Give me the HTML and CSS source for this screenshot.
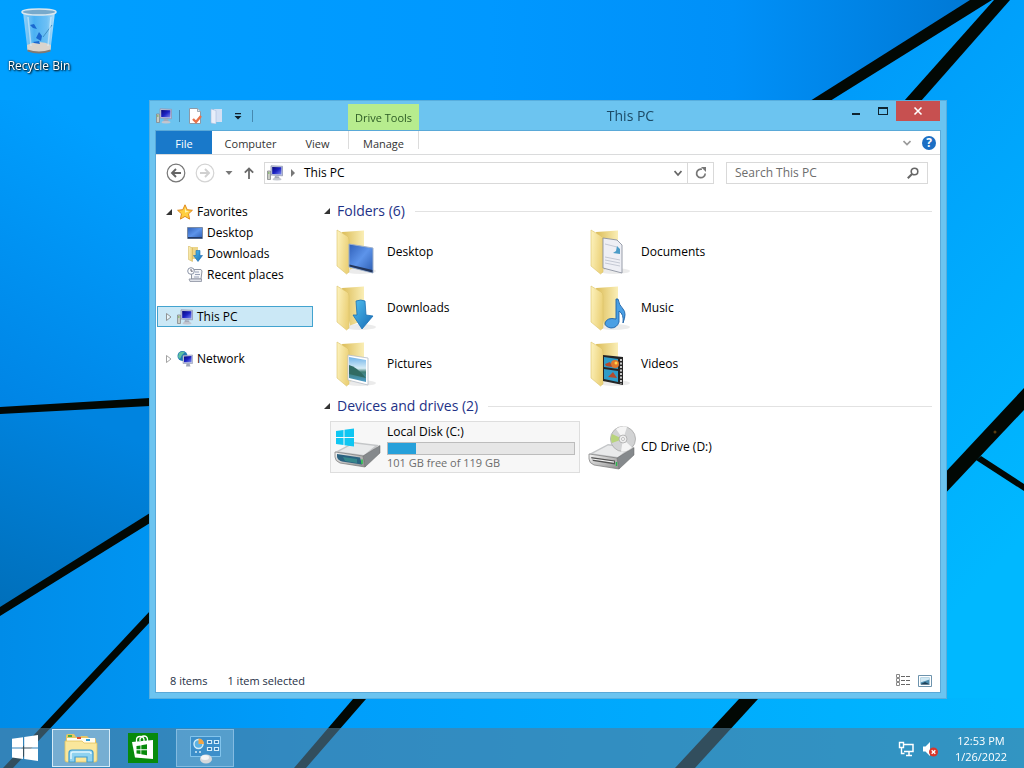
FILE: index.html
```html
<!DOCTYPE html>
<html lang="en">
<head>
    <meta charset="UTF-8">
    <meta name="viewport" content="width=device-width, initial-scale=1.0">
    <title>This PC</title>
    <link rel="stylesheet" href="styles.css">
</head>
<body>
    <!-- Shared icons -->
    <svg class="sprite" aria-hidden="true">
        <defs>
            <linearGradient id="g-flap" x1="0" y1="0" x2="1" y2="0.3">
                <stop offset="0" stop-color="#fdf3bf"/><stop offset="1" stop-color="#ecd27a"/>
            </linearGradient>
            <linearGradient id="g-back" x1="0" y1="0" x2="1" y2="0">
                <stop offset="0" stop-color="#dcbd58"/><stop offset="1" stop-color="#faeeb6"/>
            </linearGradient>
            <linearGradient id="g-screen" x1="0" y1="0" x2="1" y2="1">
                <stop offset="0" stop-color="#2f5fb8"/><stop offset="0.5" stop-color="#5d94ea"/><stop offset="1" stop-color="#2c5cb0"/>
            </linearGradient>
            <linearGradient id="g-arrow" x1="0" y1="0" x2="1" y2="1">
                <stop offset="0" stop-color="#4fc0f0"/><stop offset="1" stop-color="#1769b4"/>
            </linearGradient>
            <linearGradient id="g-photo" x1="0" y1="0" x2="0" y2="1">
                <stop offset="0" stop-color="#6fb2e8"/><stop offset="0.45" stop-color="#d6ecf6"/><stop offset="0.6" stop-color="#3f7f76"/><stop offset="1" stop-color="#4b9bc8"/>
            </linearGradient>
            <linearGradient id="g-metal" x1="0" y1="0" x2="1" y2="1">
                <stop offset="0" stop-color="#f6f6f6"/><stop offset="1" stop-color="#8c8c8c"/>
            </linearGradient>
            <linearGradient id="g-pc" x1="0" y1="0" x2="1" y2="1">
                <stop offset="0" stop-color="#0a0a78"/><stop offset="0.5" stop-color="#1c22c4"/><stop offset="1" stop-color="#7d8bf0"/>
            </linearGradient>
            <linearGradient id="g-glass" x1="0" y1="0" x2="1" y2="0">
                <stop offset="0" stop-color="#9ad2f6"/><stop offset="0.35" stop-color="#4fb2f2"/><stop offset="0.75" stop-color="#74c2f4"/><stop offset="1" stop-color="#c0e4fa"/>
            </linearGradient>
        </defs>

        <symbol id="i-folder" viewBox="0 0 48 48">
            <ellipse cx="28" cy="43" rx="16" ry="3" fill="#000" opacity="0.08"/>
            <path d="M10 4l22-1.500v34l-14 5z" fill="url(#g-back)"/>
            <path d="M5 2l10 6q2 1 2 4v32l-2.500 2L5 38z" fill="url(#g-flap)" stroke="#dcc26a" stroke-width="0.6"/>
        </symbol>

        <symbol id="i-pc" viewBox="0 0 16 16">
            <path d="M.5 6h3v8.500h-3z" fill="#c9ccc4" stroke="#85888c" stroke-width="0.8"/>
            <path d="M1 8h1.500" stroke="#5da83a"/>
            <path d="M4 .8l11.500.5v9.500L4 10z" fill="#c7cde0" stroke="#8f97b4" stroke-width="0.8"/>
            <path d="M5.200 2l9.200.3v7.300l-9.200-.5z" fill="url(#g-pc)"/>
            <path d="M8 11l4 .4.800 2.600H7z" fill="#a4a9b8"/>
            <ellipse cx="10" cy="14.200" rx="4.500" ry="1.200" fill="#c3c6cf"/>
        </symbol>

        <symbol id="i-winlogo" viewBox="0 0 26 26">
            <path d="M0 3.700l11-1.500v10.300H0zM12.200 2L26 0v12.500H12.200zM0 13.600h11V24L0 22.400zM12.200 13.600H26V26l-13.800-1.900z" fill="currentColor"/>
        </symbol>

        <symbol id="i-drive" viewBox="0 0 48 28">
            <path d="M1 12L20 2l25 3-14 12z" fill="#c4c6c8"/>
            <path d="M5 11.500L20 3.500l21 2.500-11 9z" fill="#e9eaeb"/>
            <path d="M29 16L46 5.500V13L31 27z" fill="#85898c" stroke="#666" stroke-width="0.5"/>
            <path d="M1 12l28 4 2 11-25-4q-5-2-5-6z" fill="url(#g-metal)" stroke="#777" stroke-width="0.7"/>
        </symbol>
    </svg>

    <main class="desktop">
        <svg class="wallpaper" viewBox="0 0 1024 768" preserveAspectRatio="none" aria-hidden="true">
            <defs>
                <linearGradient id="w-base" x1="0" y1="0" x2="1" y2="0.7">
                    <stop offset="0" stop-color="#009dff"/>
                    <stop offset="0.6" stop-color="#009bfa"/>
                    <stop offset="1" stop-color="#00b8ff"/>
                </linearGradient>
                <linearGradient id="w-top" x1="0" y1="0" x2="1" y2="0">
                    <stop offset="0" stop-color="#00a0ff"/>
                    <stop offset="0.5" stop-color="#0098ff"/>
                    <stop offset="0.75" stop-color="#0090f8"/>
                    <stop offset="1" stop-color="#0078d4"/>
                </linearGradient>
                <linearGradient id="w-left" x1="0.3" y1="0" x2="0" y2="1">
                    <stop offset="0" stop-color="#0084e0"/>
                    <stop offset="1" stop-color="#006fba"/>
                </linearGradient>
                <linearGradient id="w-fade" x1="0.3" y1="0" x2="0" y2="1">
                    <stop offset="0" stop-color="#009fff"/>
                    <stop offset="1" stop-color="#0084e4"/>
                </linearGradient>
                <linearGradient id="w-bottom" x1="0" y1="0" x2="1" y2="0">
                    <stop offset="0" stop-color="#008ce8"/>
                    <stop offset="0.3" stop-color="#009dfb"/>
                    <stop offset="1" stop-color="#00b8ff"/>
                </linearGradient>
            </defs>
            <rect width="1024" height="768" fill="url(#w-base)"/>
            <path d="M0 0h978L820 101H0z" fill="url(#w-top)"/>
            <path d="M0 100h150v302L0 411z" fill="url(#w-fade)"/>
            <path d="M0 411l150-8v117L0 611z" fill="url(#w-left)"/>
            <path d="M0 611l150-93v180h874v70H0z" fill="url(#w-bottom)"/>
            <g fill="#020804">
                <path d="M810 101L970 0h22L830 101z"/>
                <path d="M904 101L994 0h16l-89 101z"/>
                <path d="M940 478l84-90v22l-84 89z"/>
                <path d="M976 460l5-4 43 28v7z"/>
                <path d="M739 699h19l-63 69h-20z"/>
                <path d="M0 407l150-9v8L0 414z"/>
                <path d="M0 607l150-94v10L0 616z"/>
                <path d="M150 611v11L13 768H3z"/>
                <path d="M353 699h13l-60 69h-12z"/>
            </g>
            <circle cx="995" cy="432" r="1.500" fill="#5a3d10"/>
        </svg>

        <button class="desktop-icon" type="button">
            <svg class="bin" viewBox="0 0 38 46" aria-hidden="true">
                <path d="M3 4l4.500 38Q19 48 30.500 42L35 4z" fill="url(#g-glass)" opacity="0.95"/>
                <path d="M7 37q12-6 24 0l-.5 5Q19 48 7.500 42z" fill="#d9d4cd"/>
                <path d="M7.500 41.500q11.500 4 23 0v2q-11.500 4-23 0z" fill="#7e7a74"/>
                <path d="M10 17l4-1 3 5-4-1zM16 30l3-6 3 4-1 5zM13 34l6-1 1 3-6-1z" fill="#1a68d0"/>
                <path d="M23 29l9-12" stroke="#3e8fc4" stroke-width="1"/>
                <path d="M8 9l3 29M31 9l-3 29" stroke="#d8effc" stroke-width="1.500" opacity="0.6"/>
                <ellipse cx="19" cy="4" rx="17" ry="3" fill="#77a9cb" stroke="#dbe7ee" stroke-width="1.500"/>
            </svg>
            <span>Recycle Bin</span>
        </button>

        <section class="window" aria-label="This PC">
            <header class="titlebar">
                <div class="quick-access">
                    <svg class="icon16" aria-hidden="true"><use href="#i-pc"/></svg>
                    <span class="divider"></span>
                    <button type="button" aria-label="Properties">
                        <svg class="icon16" viewBox="0 0 16 16" aria-hidden="true">
                            <path d="M2.500.5h8l3 3v12h-11z" fill="#fff" stroke="#8c9aa8"/>
                            <path d="M10.500.5v3h3" fill="#dfe5ea" stroke="#8c9aa8" stroke-width="0.8"/>
                            <path d="M6 11l3 3 5-6" fill="none" stroke="#e8724a" stroke-width="2.400"/>
                        </svg>
                    </button>
                    <button type="button" aria-label="New folder">
                        <svg class="icon16" viewBox="0 0 16 16" aria-hidden="true">
                            <path d="M5 1h8v13H5z" fill="#d4e0f4"/>
                            <path d="M2 1l5 1.500V16l-5-1z" fill="#e8eefa" stroke="#a8bede" stroke-width="0.6"/>
                        </svg>
                    </button>
                    <button class="narrow" type="button" aria-label="Customize toolbar">
                        <svg class="icon8" viewBox="0 0 8 8" aria-hidden="true"><path d="M1 1h6v1.300H1zM.5 4h7L4 7.500z" fill="#10202c"/></svg>
                    </button>
                    <span class="divider"></span>
                </div>
                <div class="context-tab">Drive Tools</div>
                <h1 class="title">This PC</h1>
                <div class="window-controls">
                    <button type="button" aria-label="Minimize"><svg viewBox="0 0 12 12" aria-hidden="true"><path d="M2 8h8v2H2z" fill="#0f2430"/></svg></button>
                    <button type="button" aria-label="Maximize"><svg viewBox="0 0 12 12" aria-hidden="true"><path d="M1 2h10v8H1zM2 4v5h8V4z" fill="#0f2430" fill-rule="evenodd"/></svg></button>
                    <button class="close" type="button" aria-label="Close"><svg viewBox="0 0 12 12" aria-hidden="true"><path d="M2.500 2.500l7 7m0-7l-7 7" stroke="#fff" stroke-width="1.600"/></svg></button>
                </div>
            </header>

            <div class="client">
                <nav class="ribbon">
                    <button class="tab file" type="button">File</button>
                    <button class="tab computer" type="button">Computer</button>
                    <button class="tab view" type="button">View</button>
                    <button class="tab manage" type="button">Manage</button>
                    <div class="ribbon-right">
                        <button type="button" aria-label="Expand the ribbon"><svg class="icon8" viewBox="0 0 8 8" aria-hidden="true"><path d="M.5 2L4 5.500 7.500 2" fill="none" stroke="#9a9a9a" stroke-width="1.700"/></svg></button>
                        <button class="help" type="button" aria-label="Help">?</button>
                    </div>
                </nav>

                <div class="toolbar">
                    <div class="history">
                        <button type="button" aria-label="Back">
                            <svg class="icon20" viewBox="0 0 20 20" aria-hidden="true"><circle cx="10" cy="10" r="8.800" fill="#fff" stroke="#777" stroke-width="1.200"/><path d="M15 10H6m4-4l-4 4 4 4" fill="none" stroke="#666" stroke-width="1.900"/></svg>
                        </button>
                        <button type="button" aria-label="Forward" disabled>
                            <svg class="icon20" viewBox="0 0 20 20" aria-hidden="true"><circle cx="10" cy="10" r="8.800" fill="#fff" stroke="#d4d4d4" stroke-width="1.200"/><path d="M5 10h9m-4-4l4 4-4 4" fill="none" stroke="#d0d0d0" stroke-width="1.900"/></svg>
                        </button>
                        <button class="recent" type="button" aria-label="Recent locations"><svg class="icon8" viewBox="0 0 8 8" aria-hidden="true"><path d="M.5 2h7L4 6z" fill="#777"/></svg></button>
                        <button type="button" aria-label="Up"><svg class="icon12" viewBox="0 0 12 12" aria-hidden="true"><path d="M6 12V1.500M1.800 5.700L6 1.500l4.200 4.200" fill="none" stroke="#6a6a6a" stroke-width="1.800"/></svg></button>
                    </div>
                    <div class="address">
                        <svg class="icon16" aria-hidden="true"><use href="#i-pc"/></svg>
                        <svg class="icon8" viewBox="0 0 8 8" aria-hidden="true"><path d="M2 0l4 4-4 4z" fill="#777"/></svg>
                        <button class="crumb" type="button">This PC</button>
                        <button class="drop" type="button" aria-label="Previous locations"><svg class="icon8" viewBox="0 0 8 8" aria-hidden="true"><path d="M.5 2L4 6l3.500-4" fill="none" stroke="#666" stroke-width="1.800"/></svg></button>
                        <button class="refresh" type="button" aria-label="Refresh"><svg class="icon12" viewBox="0 0 12 12" aria-hidden="true"><path d="M7 2.200A4.300 4.300 0 1 0 10.200 6.500" fill="none" stroke="#777" stroke-width="1.700"/><path d="M6 0h5v5z" fill="#777"/></svg></button>
                    </div>
                    <div class="search">
                        <input type="text" placeholder="Search This PC" aria-label="Search This PC">
                        <svg class="icon12" viewBox="0 0 12 12" aria-hidden="true"><circle cx="7.500" cy="4.500" r="3.300" fill="none" stroke="#666" stroke-width="1.600"/><path d="M5 7L.8 11.200" stroke="#666" stroke-width="2"/></svg>
                    </div>
                </div>

                <div class="body">
                    <aside class="tree">
                        <button class="node" type="button">
                            <svg class="icon8" viewBox="0 0 8 8" aria-hidden="true"><path d="M7 1v6H1z" fill="#333"/></svg>
                            <svg class="icon16" viewBox="0 0 16 16" aria-hidden="true"><path d="M8 .8l2.200 4.900 5.200.6-3.900 3.500 1.100 5.300L8 12.400l-4.600 2.700 1.100-5.300L.6 6.300l5.200-.6z" fill="#ffcf3f" stroke="#e08a1e" stroke-width="1"/><path d="M8 3.500l1.200 3.300 3 .5-4.200 1.400z" fill="#fff3b0"/></svg>
                            Favorites
                        </button>
                        <button class="node child" type="button">
                            <svg class="icon16" viewBox="0 0 16 16" aria-hidden="true"><path d="M.5 2.500h15v11H.5z" fill="url(#g-screen)" stroke="#7a8ba4"/><path d="M1 12h14v1.500H1z" fill="#233a66"/></svg>
                            Desktop
                        </button>
                        <button class="node child" type="button">
                            <svg class="icon16" viewBox="0 0 16 16" aria-hidden="true"><path d="M5 1h6v12H5z" fill="#ecd58a"/><path d="M1.500 0l4 2v13.500l-4-2z" fill="url(#g-flap)" stroke="#cfae4e" stroke-width="0.5"/><path d="M9 4.500h4v5h2.500L11 15.500 6.500 9.500H9z" fill="url(#g-arrow)" stroke="#1a6cb0" stroke-width="0.6"/></svg>
                            Downloads
                        </button>
                        <button class="node child" type="button">
                            <svg class="icon16" viewBox="0 0 16 16" aria-hidden="true"><path d="M4.500 2.500H14l1 1.500-1 8H4.500z" fill="#f4f5f8" stroke="#9096a2"/><path d="M2 12h12.500v2.500H3z" fill="#dfe2e9" stroke="#8a90a0" stroke-width="0.8"/><path d="M8 5h4M8 7.500h5M7 10h5" stroke="#98a0b6"/><circle cx="4" cy="4" r="3.300" fill="#fff" stroke="#8a93a6"/><path d="M4 2v2.200h1.800" fill="none" stroke="#556" stroke-width="0.9"/></svg>
                            Recent places
                        </button>
                        <button class="node group selected" type="button">
                            <svg class="icon8" viewBox="0 0 8 8" aria-hidden="true"><path d="M1.500.5L6 4 1.500 7.500z" fill="#e8f5fb" stroke="#888" stroke-width="0.9"/></svg>
                            <svg class="icon16" aria-hidden="true"><use href="#i-pc"/></svg>
                            This PC
                        </button>
                        <button class="node group" type="button">
                            <svg class="icon8" viewBox="0 0 8 8" aria-hidden="true"><path d="M1.500.5L6 4 1.500 7.500z" fill="#fff" stroke="#999" stroke-width="0.9"/></svg>
                            <svg class="icon16" viewBox="0 0 16 16" aria-hidden="true"><circle cx="5.500" cy="5" r="5" fill="#1f78b4"/><path d="M2 2q3-2.500 6-1L5 4 3 8 1 6z" fill="#5fc0a0"/><path d="M6 4.500l9.500-.5v8.500H6z" fill="#c7cde0" stroke="#8f97b4" stroke-width="0.6"/><path d="M7 5.500l7.500-.4v6.200H7z" fill="url(#g-pc)"/><path d="M9.500 12.500h3l1 3H9z" fill="#9fa6b8"/></svg>
                            Network
                        </button>
                    </aside>

                    <div class="files">
                        <h2 class="section-title"><svg class="icon8" viewBox="0 0 8 8" aria-hidden="true"><path d="M7 1v6H1z" fill="#333"/></svg><span>Folders (6)</span></h2>
                        <div class="tiles">
                            <button class="tile" type="button">
                                <svg class="icon48" viewBox="2 0 48 48" aria-hidden="true"><use href="#i-folder" width="48" height="48"/><path d="M17 16l24 4v25l-24-6z" fill="url(#g-screen)" stroke="#9fb0c8"/><path d="M17.500 36.500l23 5.500v2.500l-23-6z" fill="#22355a"/></svg>
                                <span>Desktop</span>
                            </button>
                            <button class="tile" type="button">
                                <svg class="icon48" viewBox="2 0 48 48" aria-hidden="true"><use href="#i-folder" width="48" height="48"/><path d="M17 10l14 2 5 5v28l-19-5z" fill="#eeeff5" stroke="#8d93a0" stroke-width="0.9"/><path d="M19 16l12 3M19 29l15 3M19 32l15 3M19 35l15 3" stroke="#c0c4d0" stroke-width="0.9"/><path d="M27 25l7 1v-5l-3-3-1 5z" fill="#4c9cc8"/></svg>
                                <span>Documents</span>
                            </button>
                            <button class="tile" type="button">
                                <svg class="icon48" viewBox="2 0 48 48" aria-hidden="true"><use href="#i-folder" width="48" height="48"/><path d="M24 17q5-2 9 0l1 14 7 1-11 13-9-14h4z" fill="url(#g-arrow)" stroke="#1b71b5" stroke-width="0.8"/></svg>
                                <span>Downloads</span>
                            </button>
                            <button class="tile" type="button">
                                <svg class="icon48" viewBox="2 0 48 48" aria-hidden="true"><use href="#i-folder" width="48" height="48"/><path d="M30 15h2q1 6 5 10t0 14q1-9-4-12v11q-2 6-8 6-6-1-6-5 2-6 11-4z" fill="#4a9fe4" stroke="#1c62a8" stroke-width="0.9"/></svg>
                                <span>Music</span>
                            </button>
                            <button class="tile" type="button">
                                <svg class="icon48" viewBox="2 0 48 48" aria-hidden="true"><use href="#i-folder" width="48" height="48"/><path d="M16 15l20 3v27l-20-5z" fill="#fff" stroke="#b5bcc6" stroke-width="0.8"/><path d="M17 17l17 3v22l-17-4z" fill="url(#g-photo)"/><path d="M17 25q8 2 17 13l-17-4z" fill="#316b63"/></svg>
                                <span>Pictures</span>
                            </button>
                            <button class="tile" type="button">
                                <svg class="icon48" viewBox="2 0 48 48" aria-hidden="true"><use href="#i-folder" width="48" height="48"/><path d="M17 15l20 2v28l-20-4z" fill="#252525"/><path d="M18 17l14 2v10l-14-2zM18 29l14 2v11l-14-3z" fill="#2f9cc8"/><circle cx="29" cy="24" r="4" fill="#e0782c"/><path d="M19 24l5-2 2 5-6-1zM22 37l5-5 4 6z" fill="#b64a2a"/><circle cx="30" cy="23" r="1.500" fill="#ffd24a"/><path d="M35 19v25" stroke="#f2f2f2" stroke-width="1.600" stroke-dasharray="2 1.500"/></svg>
                                <span>Videos</span>
                            </button>
                        </div>

                        <h2 class="section-title"><svg class="icon8" viewBox="0 0 8 8" aria-hidden="true"><path d="M7 1v6H1z" fill="#333"/></svg><span>Devices and drives (2)</span></h2>
                        <div class="tiles">
                            <button class="tile active" type="button">
                                <svg class="icon48" viewBox="0 0 48 48" aria-hidden="true">
                                    <use href="#i-drive" y="17" width="48" height="28"/>
                                    <path d="M3 31l23 3.500 2 7-20-3q-5-2-5-5z" fill="#2b6280"/>
                                    <path d="M9 34l14 2v4l-12-2z" fill="#3c9790" opacity="0.7"/>
                                    <path d="M28 36.500v4.500" stroke="#27c84a" stroke-width="1.500"/>
                                    <g fill="#10c6f2"><path d="M2 8l7.500-1v7H2zM10.500 6.800L20 5.500V14h-9.500zM2 15h7.500v7L2 21zM10.500 15H20v8.500l-9.500-1.300z"/></g>
                                </svg>
                                <span class="drive-info">
                                    <span>Local Disk (C:)</span>
                                    <span class="capacity"><span class="used" style="width: 15%"></span></span>
                                    <span class="free">101 GB free of 119 GB</span>
                                </span>
                            </button>
                            <button class="tile" type="button">
                                <svg class="icon48" viewBox="0 0 48 48" aria-hidden="true">
                                    <use href="#i-drive" y="19" width="48" height="28"/>
                                    <path d="M3 34l24 3.500v4L5 38z" fill="#555"/><path d="M4 36l22 3.200" stroke="#f4f4f4" stroke-width="1.200"/>
                                    <path d="M28.500 39v4" stroke="#27b84a" stroke-width="1.400"/>
                                    <circle cx="35" cy="16" r="12.500" fill="#d2d3d4" stroke="#a8a8a8" stroke-width="0.8"/>
                                    <path d="M35 16L28 6q6-4 11-2zM35 16l9 8.500q-5 5-11 4z" fill="#f5f5f5"/>
                                    <path d="M35 16l-11-5q-2 5 0 9z" fill="#b8d47c"/>
                                    <circle cx="35" cy="16" r="4" fill="#eee" stroke="#aaa" stroke-width="0.8"/><circle cx="35" cy="16" r="1.500" fill="#fff" stroke="#999" stroke-width="0.6"/>
                                </svg>
                                <span>CD Drive (D:)</span>
                            </button>
                        </div>
                    </div>
                </div>

                <footer class="statusbar">
                    <span>8 items</span>
                    <span>1 item selected</span>
                    <div class="view-switch">
                        <button type="button" aria-label="Details view"><svg class="icon16" viewBox="0 0 16 16" aria-hidden="true"><path d="M1.500 1.500h3v3h-3zM1.500 5.500h3v3h-3zM1.500 9.500h3v3h-3z" fill="#fff" stroke="#888"/><path d="M6 3.500h4m1 0h4M6 7.500h4m1 0h4M6 11.500h4m1 0h4" stroke="#666"/></svg></button>
                        <button type="button" aria-label="Large icons view"><svg class="icon16" viewBox="0 0 16 16" aria-hidden="true"><path d="M1.500 2.500h13v11h-13z" fill="#fff" stroke="#6d93ad"/><path d="M3.500 4.500h9v7h-9z" fill="#4d8cae"/><path d="M3.500 4.500h9v2l-9 3z" fill="#cfe8f4"/><path d="M4 11l4-2 5 2.500H4z" fill="#1f3f56"/></svg></button>
                    </div>
                </footer>
            </div>
        </section>
    </main>

    <footer class="taskbar">
        <button class="start" type="button" aria-label="Start"><svg viewBox="0 0 26 26" aria-hidden="true"><use href="#i-winlogo"/></svg></button>
        <button class="task current" type="button" aria-label="File Explorer">
            <svg viewBox="0 0 36 32" aria-hidden="true">
                <path d="M3 4q0-2 2-2h6l2 3h4l1-1h6l2 2h5q2 0 2 2v20H3z" fill="#e8c765"/>
                <path d="M4 6h28v5H4z" fill="#fffdf2"/>
                <path d="M5 3h4v2H5z" fill="#48b04a"/><path d="M14 5h4v2h-4z" fill="#e04b32"/><path d="M23 7h4v2h-4z" fill="#2c9fd8"/>
                <path d="M2 9h17l2 2h13v17q0 2-2 2H4q-2 0-2-2z" fill="#fae79c" stroke="#e2c35e" stroke-width="0.8"/>
                <path d="M6 30V21q0-3 3-3h18q3 0 3 3v9h-6v-5H12v5z" fill="#8fd2f0" stroke="#3e9bd0" stroke-width="1.200"/>
                <path d="M8 27v-5q0-2 2-2h16q2 0 2 2" fill="none" stroke="#dff5fd" stroke-width="1.500"/>
            </svg>
        </button>
        <button class="task plain" type="button" aria-label="Store">
            <svg viewBox="0 0 30 30" aria-hidden="true">
                <path d="M0 0h30v30H0z" fill="#078a0c"/>
                <path d="M4 9l21-2v19L7 24.500z" fill="#fff"/>
                <path d="M8.500 9V7q0-3.500 3.500-3.500t4 3V9M12 8V6q1-3 4-3t3.500 3v2" fill="none" stroke="#fff" stroke-width="1.300"/>
                <path d="M8.500 13l4-.6v3.900h-4zM13.300 12.200l5.700-.9v5h-5.700zM8.500 17.200h4v3.900l-4-.6zM13.300 17.200H19v5l-5.700-.9z" fill="#078a0c"/>
            </svg>
        </button>
        <button class="task" type="button" aria-label="Control Panel">
            <svg viewBox="0 0 36 32" aria-hidden="true">
                <path d="M3.500 4.500h30v20h-30z" fill="#3c8fca" stroke="#82c4ec"/>
                <circle cx="11.500" cy="12" r="4.500" fill="#5cb2e4" stroke="#d3eefa" stroke-width="1.400"/>
                <path d="M11.500 12V6.500q5 0 5.500 5.500z" fill="#f3a545"/>
                <path d="M20.500 8.500h4v3h-4zM27.500 8.500h4v3h-4zM20.500 15.500h4v3h-4zM27.500 15.500h4v3h-4z" fill="#2b76b4" stroke="#d3ecf8" stroke-width="1.200"/>
                <path d="M8 20h2m2 0h2" stroke="#d3ecf8" stroke-width="1.500"/>
                <ellipse cx="19" cy="27" rx="6" ry="4.500" fill="#d5d8db"/><ellipse cx="18" cy="25.500" rx="4" ry="2.500" fill="#f4f5f6"/>
            </svg>
        </button>
        <div class="tray">
            <svg class="icon16" viewBox="0 0 16 16" aria-hidden="true"><path d="M6 3.500h9v7H6M8 14.500h6M11 11v3" fill="none" stroke="#fff" stroke-width="1.500"/><path d="M1.500 1.500h4v5h-4zM3.500 6.500v6h3" fill="none" stroke="#fff" stroke-width="1.400"/></svg>
            <svg class="icon16" viewBox="0 0 16 16" aria-hidden="true"><path d="M1 5.500h2.500L8 1v14l-4.500-4.500H1z" fill="#fff"/><circle cx="11.500" cy="11" r="4.500" fill="#d8352a"/><path d="M9.700 9.200l3.600 3.600m0-3.600l-3.600 3.600" stroke="#fff" stroke-width="1.400"/></svg>
            <div class="clock"><span>12:53 PM</span><span>1/26/2022</span></div>
        </div>
    </footer>
</body>
</html>
```
FILE: styles.css
```css
* {
    margin: 0;
    padding: 0;
    box-sizing: border-box;
}

body {
    font-family: 'Open Sans', 'Noto Sans', sans-serif;
    font-size: 12px;
    line-height: 16px;
    color: #000;
    height: 100vh;
    background: #009dff;
    overflow: hidden;
    display: flex;
    flex-direction: column;
}

button {
    font: inherit;
    color: inherit;
    background: none;
    border: none;
    display: flex;
    align-items: center;
    justify-content: center;
}

svg {
    display: block;
    flex-shrink: 0;
}

.sprite {
    position: absolute;
    width: 0;
    height: 0;
}

.icon8 { width: 8px; height: 8px; }
.icon12 { width: 12px; height: 12px; }
.icon16 { width: 16px; height: 16px; }
.icon20 { width: 20px; height: 20px; }
.icon48 { width: 48px; height: 48px; }

/* Desktop */
.desktop {
    flex: 1;
    padding: 8px 2px;
}

.wallpaper {
    position: fixed;
    top: 0;
    left: 0;
    width: 100%;
    height: 100%;
    z-index: -1;
}

.desktop-icon {
    width: 74px;
    flex-direction: column;
    gap: 4px;
    color: #fff;
    text-shadow: 1px 1px 2px #000, 0 0 2px #000;
}

.bin {
    width: 38px;
    height: 46px;
}

/* Explorer window */
.window {
    position: absolute;
    top: 100px;
    left: 149px;
    right: 77px;
    bottom: 69px;
    display: flex;
    flex-direction: column;
    padding: 0 6px 6px;
    background: #6cc4f0;
    border: 1px solid #58aede;
}

.titlebar {
    display: flex;
    align-items: flex-start;
    height: 30px;
}

.quick-access {
    display: flex;
    align-items: center;
    gap: 6px;
    width: 192px;
    height: 30px;
}

.divider {
    width: 1px;
    height: 12px;
    margin: 0 1px;
    background: #4689b0;
}

.narrow {
    width: 14px;
}

.context-tab {
    align-self: flex-end;
    width: 71px;
    height: 27px;
    line-height: 27px;
    font-size: 11px;
    text-align: center;
    color: #2c5a24;
    background: #b7ec8e;
}

.title {
    flex: 1;
    font-size: 14px;
    font-weight: normal;
    line-height: 30px;
    text-align: center;
    color: #1c4a66;
}

.window-controls {
    display: flex;
}

.window-controls button {
    width: 27px;
    height: 20px;
}

.window-controls .close {
    width: 44px;
    background: #c75050;
}

.window-controls svg {
    width: 12px;
    height: 12px;
}

.client {
    flex: 1;
    display: flex;
    flex-direction: column;
    background: #fff;
    outline: 1px solid #5aa9d8;
}

/* Ribbon tabs */
.ribbon {
    display: flex;
    height: 24px;
    border-bottom: 1px solid #dadbdc;
}

.tab {
    font-size: 11px;
    color: #333;
    height: 23px;
    padding-top: 2px;
}

.tab.file { width: 56px; color: #fff; background: #1979ca; }
.tab.computer { width: 77px; }
.tab.view { width: 57px; margin-right: 2px; }

.tab.manage {
    width: 71px;
    height: 18px;
    padding-top: 7px;
    border-left: 1px solid #dcdcdc;
    border-right: 1px solid #dcdcdc;
}

.ribbon-right {
    display: flex;
    align-items: center;
    gap: 11px;
    margin-left: auto;
    padding-right: 4px;
}

.help {
    width: 14px;
    height: 14px;
    border-radius: 50%;
    background: #1c6fc4;
    color: #fff;
    font-size: 12px;
    font-weight: bold;
}

/* Navigation bar */
.toolbar {
    display: flex;
    align-items: center;
    height: 36px;
    padding: 0 12px 0 10px;
}

.history {
    display: flex;
    align-items: center;
    width: 98px;
    gap: 9px;
}

.recent { margin: 0 1px; }

.address {
    flex: 1;
    display: flex;
    align-items: center;
    height: 22px;
    border: 1px solid #d9d9d9;
    padding-left: 2px;
    gap: 6px;
}

.crumb {
    margin-left: 1px;
}

.drop {
    width: 18px;
    margin-left: auto;
}

.refresh {
    width: 26px;
    height: 20px;
    margin-left: -6px;
    border-left: 1px solid #d9d9d9;
}

.search {
    display: flex;
    align-items: center;
    width: 202px;
    height: 22px;
    margin-left: 12px;
    padding: 0 8px;
    border: 1px solid #d9d9d9;
}

.search input {
    flex: 1;
    min-width: 0;
    font: inherit;
    border: none;
    outline: none;
    background: none;
}

.search input::placeholder {
    color: #6d6d6d;
    opacity: 1;
}

/* Tree and files */
.body {
    flex: 1;
    display: flex;
    min-height: 0;
}

.tree {
    width: 158px;
    padding: 10px 1px;
}

.node {
    width: 100%;
    height: 21px;
    justify-content: flex-start;
    gap: 4px;
    padding-left: 7px;
    border: 1px solid transparent;
}

.node.child {
    padding-left: 29px;
}

.node.group {
    margin-top: 21px;
}

.node.selected {
    background: #cbe8f6;
    border-color: #42a3cf;
}

.files {
    flex: 1;
    padding: 8px 8px 0 9px;
}

.section-title {
    display: flex;
    align-items: center;
    gap: 6px;
    height: 24px;
    font-size: 14px;
    font-weight: normal;
    color: #1e3287;
}

.section-title::after {
    content: '';
    flex: 1;
    height: 1px;
    margin-left: 4px;
    background: #e2e2e2;
}

.tiles {
    display: grid;
    grid-template-columns: repeat(auto-fill, 250px);
    gap: 4px;
    padding: 3px 7px 4px;
}

.tile {
    height: 52px;
    justify-content: flex-start;
    gap: 5px;
    padding: 0 4px 0 3px;
    border: 1px solid transparent;
    text-align: left;
}

.tile.active {
    background: #f7f7f7;
    border-color: #dedede;
}

.drive-info {
    flex: 1;
    display: flex;
    flex-direction: column;
}

.capacity {
    height: 13px;
    margin-top: 2px;
    background: #e6e6e6;
    border: 1px solid #bcbcbc;
}

.used {
    display: block;
    height: 100%;
    background: #26a0da;
}

.free {
    font-size: 11px;
    color: #6d6d6d;
}

.statusbar {
    display: flex;
    align-items: center;
    gap: 20px;
    height: 24px;
    padding: 1px 7px 0 14px;
    font-size: 11px;
    color: #1e2f45;
}

.view-switch {
    display: flex;
    gap: 6px;
    margin-left: auto;
}

/* Taskbar */
.taskbar {
    display: flex;
    align-items: center;
    gap: 4px;
    height: 40px;
    background: rgba(83, 125, 153, 0.6);
}

.start {
    width: 48px;
    height: 40px;
    padding-left: 2px;
    color: #fff;
}

.start svg {
    width: 26px;
    height: 26px;
}

.task {
    width: 58px;
    height: 38px;
    background: rgba(190, 225, 245, 0.25);
    border: 1px solid rgba(190, 225, 250, 0.45);
}

.task svg {
    width: 36px;
    height: 32px;
}

.task.current {
    background: rgba(220, 235, 245, 0.4);
    border-color: #d5ebf8;
}

.task.plain {
    background: none;
    border-color: transparent;
}

.task.plain svg {
    width: 30px;
    height: 30px;
}

.tray {
    display: flex;
    align-items: center;
    gap: 8px;
    margin-left: auto;
    padding: 2px 12px 0 0;
    color: #fff;
}

.clock {
    display: flex;
    flex-direction: column;
    align-items: center;
    width: 62px;
    margin-left: 4px;
    font-size: 11px;
}
```
